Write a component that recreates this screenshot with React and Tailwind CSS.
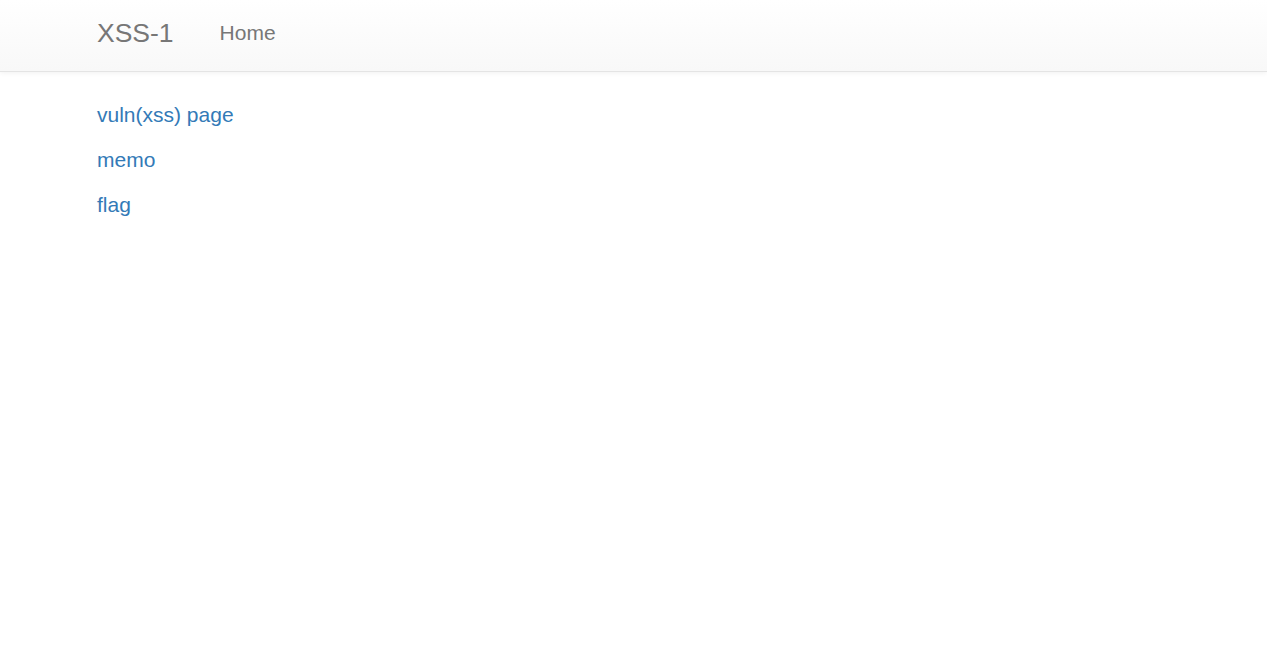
export default function App() {
  return (
    <div className="min-h-[661px] bg-white" style={{ fontFamily: '"Liberation Sans", Arial, sans-serif' }}>
      <nav className="h-[72px] border-b border-[#e4e4e4] bg-gradient-to-b from-white to-[#f8f8f8] shadow-[0_1px_5px_rgba(0,0,0,0.06)]">
        <div className="flex h-full items-center pb-[5px] pl-[97px]">
          <a className="text-[26.5px] leading-none text-[#777777]">XSS-1</a>
          <a className="mb-[1px] ml-[46px] text-[21px] leading-none text-[#777777]">Home</a>
        </div>
      </nav>
      <div className="flex flex-col items-start gap-[15px] pl-[97px] pt-[28px]">
        <a className="text-[21px] leading-[30px] text-[#337ab7]">vuln(xss) page</a>
        <a className="text-[21px] leading-[30px] text-[#337ab7]">memo</a>
        <a className="text-[21px] leading-[30px] text-[#337ab7]">flag</a>
      </div>
    </div>
  );
}
